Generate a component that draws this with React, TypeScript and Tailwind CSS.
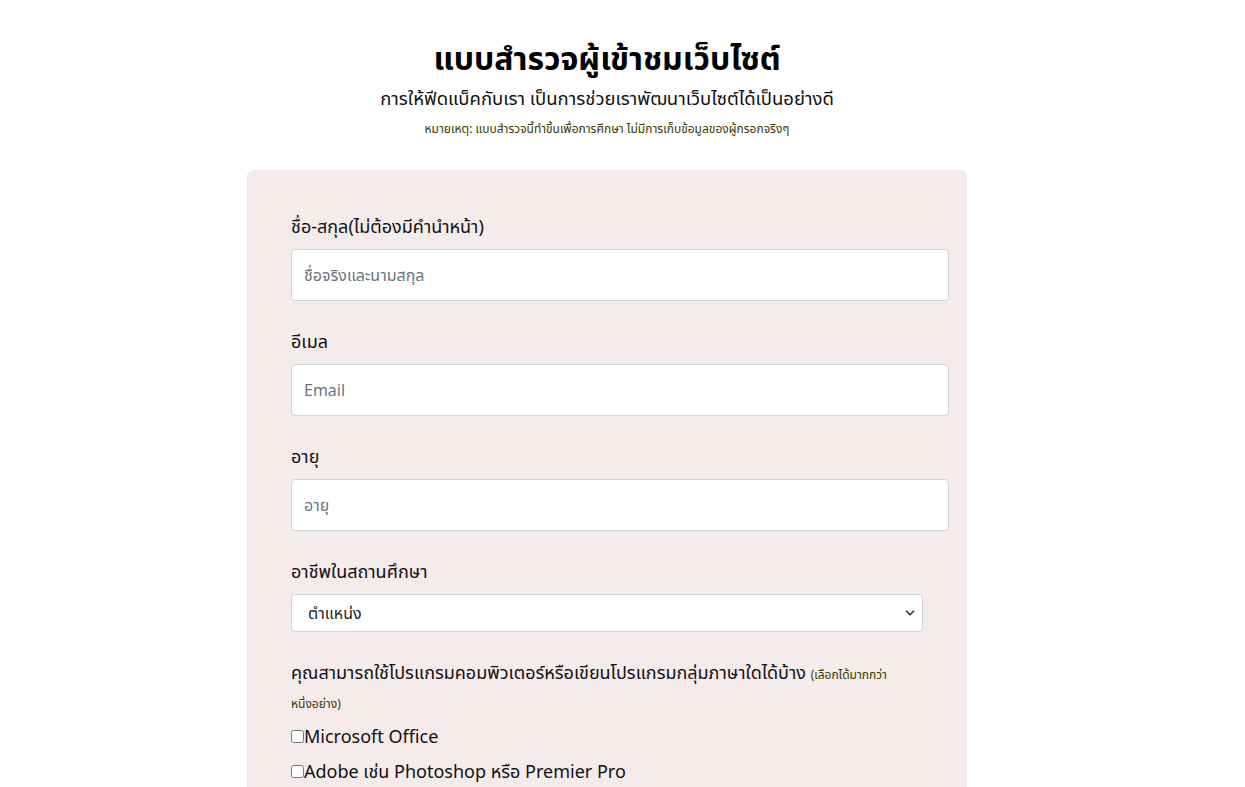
import { ChevronDown } from 'lucide-react'

const fontStack = { fontFamily: '"Noto Sans", "Noto Sans Thai", "Liberation Sans", sans-serif' }

const TextField = ({ label, placeholder }: { label: string; placeholder: string }) => (
  <div className="mb-[27px]">
    <label className="mb-[9px] block text-[18px] leading-[27px] text-[#111]">{label}</label>
    <input
      className="block h-[52px] w-[658px] rounded-[4px] border border-[#ced4da] bg-white px-3 text-[16px] text-[#212529] placeholder:text-[#6c757d] focus:outline-none"
      placeholder={placeholder}
    />
  </div>
)

const App = () => {
  return (
    <div className="min-h-screen bg-white pl-[247px] text-[#111]" style={fontStack}>
      <div className="w-[720px]">
        <div className="pt-[36px] text-center">
          <h1 className="text-[32px] font-bold leading-[44px] text-black">แบบสำรวจผู้เข้าชมเว็บไซต์</h1>
          <p className="mt-[5px] text-[18.5px] leading-[26px]">
            การให้ฟีดแบ็คกับเรา เป็นการช่วยเราพัฒนาเว็บไซต์ได้เป็นอย่างดี
          </p>
          <p className="mt-[9px] text-[12px] leading-[18px] text-[#3b3800]">
            หมายเหตุ: แบบสำรวจนี้ทำขึ้นเพื่อการศึกษา ไม่มีการเก็บข้อมูลของผู้กรอกจริงๆ
          </p>
        </div>

        <form className="mt-[32px] rounded-t-[6px] bg-[#f4ebea] pb-[6px] pl-[44px] pt-[43px]">
          <TextField label="ชื่อ-สกุล(ไม่ต้องมีคำนำหน้า)" placeholder="ชื่อจริงและนามสกุล" />
          <TextField label="อีเมล" placeholder="Email" />
          <TextField label="อายุ" placeholder="อายุ" />

          <div className="mb-[27px]">
            <label className="mb-[9px] block text-[18px] leading-[27px]">อาชีพในสถานศึกษา</label>
            <div className="relative w-[632px]">
              <select className="block h-[38px] w-full appearance-none rounded-[4px] border border-[#ced4da] bg-white pl-4 pr-8 text-[16px] text-[#212529] focus:outline-none">
                <option>ตำแหน่ง</option>
                <option>นักเรียน / นักศึกษา</option>
                <option>ครู / อาจารย์</option>
                <option>บุคลากร</option>
              </select>
              <ChevronDown
                className="pointer-events-none absolute right-[6px] top-[12px] h-[14px] w-[14px] text-[#343a40]"
                strokeWidth={3}
              />
            </div>
          </div>

          <div className="w-[632px] text-[18px] leading-[27px]">
            คุณสามารถใช้โปรแกรมคอมพิวเตอร์หรือเขียนโปรแกรมกลุ่มภาษาใดได้บ้าง{' '}
            <span className="text-[12px] text-[#3b3800]">
              (เลือกได้มากกว่า <span className="whitespace-nowrap">หนึ่งอย่าง)</span>
            </span>
          </div>

          <div className="mt-[6px] flex flex-col gap-[8px] text-[18px] leading-[27px]">
            <label className="flex items-center">
              <input type="checkbox" className="h-[13px] w-[13px]" />
              Microsoft Office
            </label>
            <label className="flex items-center">
              <input type="checkbox" className="h-[13px] w-[13px]" />
              Adobe เช่น Photoshop หรือ Premier Pro
            </label>
          </div>
        </form>
      </div>
    </div>
  )
}

export default App
